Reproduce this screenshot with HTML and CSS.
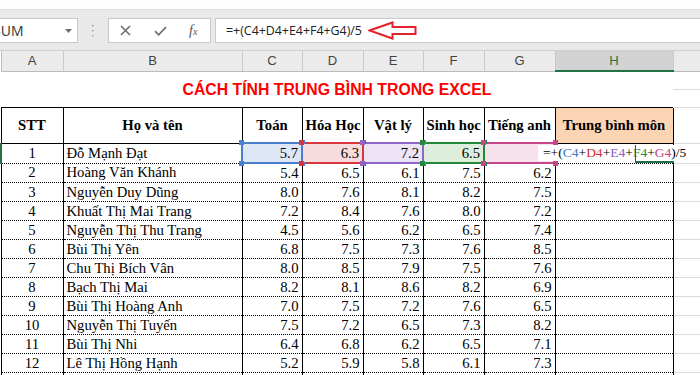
FILE: index.html
```html
<!DOCTYPE html>
<html lang="vi">
  <head>
    <meta charset="UTF-8" />
    <title>Cách tính trung bình trong Excel</title>
    <link rel="stylesheet" href="styles.css">
  </head>
  <body>
    <div class="ribbon-edge"></div>

    <div class="formula-bar">
      <div class="name-box">
        <span>SUM</span>
        <svg class="drop" width="7" height="4" viewBox="0 0 7 4"><path d="M0 0h7L3.5 4z" fill="#6d6d6d"/></svg>
      </div>
      <svg class="grip" width="3" height="12" viewBox="0 0 3 12">
        <rect x="1" y="0" width="1.4" height="1.4" fill="#9a9a9a"/>
        <rect x="1" y="5" width="1.4" height="1.4" fill="#9a9a9a"/>
        <rect x="1" y="10" width="1.4" height="1.4" fill="#9a9a9a"/>
      </svg>
      <div class="fx-buttons">
        <svg class="cancel" width="11" height="11" viewBox="0 0 11 11"><path d="M1 1l9 9M10 1l-9 9" stroke="#6e6e6e" stroke-width="1.6" fill="none"/></svg>
        <svg class="enter" width="13" height="10" viewBox="0 0 13 10"><path d="M1 5.2l3.6 3.6L12 1.2" stroke="#6e6e6e" stroke-width="1.7" fill="none"/></svg>
        <span class="fx"><i>f</i><small>x</small></span>
      </div>
      <div class="formula-input">
        <span class="formula-text">=+(C4+D4+E4+F4+G4)/5</span>
        <svg class="arrow" width="50" height="19" viewBox="0 0 50 19">
          <path d="M1.5 9.5L24.5 1.5V6H47.5V13H24.5V17.5Z" fill="#fff" stroke="#e5212b" stroke-width="2" stroke-linejoin="miter"/>
        </svg>
      </div>
    </div>

    <table class="sheet">
      <colgroup>
        <col style="width:62px">
        <col style="width:179px">
        <col style="width:60px">
        <col style="width:61px">
        <col style="width:60px">
        <col style="width:61px">
        <col style="width:71px">
        <col style="width:118px">
        <col style="width:64px">
      </colgroup>
      <thead>
        <tr class="col-heads">
          <th>A</th><th>B</th><th>C</th><th>D</th><th>E</th><th>F</th><th>G</th>
          <th class="active">H</th><th></th>
        </tr>
      </thead>
      <tbody>
        <tr class="title-row">
          <td colspan="8" class="title">CÁCH TÍNH TRUNG BÌNH TRONG EXCEL</td>
          <td class="void"></td>
        </tr>
        <tr class="head-row">
          <th>STT</th><th>Họ và tên</th><th>Toán</th><th>Hóa Học</th><th>Vật lý</th>
          <th>Sinh học</th><th>Tiếng anh</th><th class="avg">Trung bình môn</th>
          <td class="void"></td>
        </tr>
        <tr class="data-row current">
          <td class="stt">1</td><td>Đỗ Mạnh Đạt</td>
          <td class="num ref ref-c">5.7</td><td class="num ref ref-d">6.3</td>
          <td class="num ref ref-e">7.2</td><td class="num ref ref-f">6.5</td>
          <td class="num ref ref-g"></td>
          <td class="editing">
            <span class="edit-box">=+(<b class="c">C4</b>+<b class="d">D4</b>+<b class="e">E4</b>+<b class="f">F4</b>+<b class="g">G4</b>)/5<span class="edit-line"></span><span class="edit-under"></span></span>
          </td>
          <td class="void"></td>
        </tr>
        <tr class="data-row">
          <td class="stt">2</td><td>Hoàng Văn Khánh</td>
          <td class="num">5.4</td><td class="num">6.5</td><td class="num">6.1</td><td class="num">7.5</td><td class="num">6.2</td>
          <td></td><td class="void"></td>
        </tr>
        <tr class="data-row">
          <td class="stt">3</td><td>Nguyễn Duy Dũng</td>
          <td class="num">8.0</td><td class="num">7.6</td><td class="num">8.1</td><td class="num">8.2</td><td class="num">7.5</td>
          <td></td><td class="void"></td>
        </tr>
        <tr class="data-row">
          <td class="stt">4</td><td>Khuất Thị Mai Trang</td>
          <td class="num">7.2</td><td class="num">8.4</td><td class="num">7.6</td><td class="num">8.0</td><td class="num">7.2</td>
          <td></td><td class="void"></td>
        </tr>
        <tr class="data-row">
          <td class="stt">5</td><td>Nguyễn Thị Thu Trang</td>
          <td class="num">4.5</td><td class="num">5.6</td><td class="num">6.2</td><td class="num">6.5</td><td class="num">7.4</td>
          <td></td><td class="void"></td>
        </tr>
        <tr class="data-row">
          <td class="stt">6</td><td>Bùi Thị Yên</td>
          <td class="num">6.8</td><td class="num">7.5</td><td class="num">7.3</td><td class="num">7.6</td><td class="num">8.5</td>
          <td></td><td class="void"></td>
        </tr>
        <tr class="data-row">
          <td class="stt">7</td><td>Chu Thị Bích Vân</td>
          <td class="num">8.0</td><td class="num">8.5</td><td class="num">7.9</td><td class="num">7.5</td><td class="num">7.6</td>
          <td></td><td class="void"></td>
        </tr>
        <tr class="data-row">
          <td class="stt">8</td><td>Bạch Thị Mai</td>
          <td class="num">8.2</td><td class="num">8.1</td><td class="num">8.6</td><td class="num">8.2</td><td class="num">6.9</td>
          <td></td><td class="void"></td>
        </tr>
        <tr class="data-row">
          <td class="stt">9</td><td>Bùi Thị Hoàng Anh</td>
          <td class="num">7.0</td><td class="num">7.5</td><td class="num">7.2</td><td class="num">7.6</td><td class="num">6.5</td>
          <td></td><td class="void"></td>
        </tr>
        <tr class="data-row">
          <td class="stt">10</td><td>Nguyễn Thị Tuyến</td>
          <td class="num">7.5</td><td class="num">7.2</td><td class="num">6.5</td><td class="num">7.3</td><td class="num">8.2</td>
          <td></td><td class="void"></td>
        </tr>
        <tr class="data-row">
          <td class="stt">11</td><td>Bùi Thị Nhi</td>
          <td class="num">6.4</td><td class="num">6.8</td><td class="num">6.2</td><td class="num">6.5</td><td class="num">7.1</td>
          <td></td><td class="void"></td>
        </tr>
        <tr class="data-row">
          <td class="stt">12</td><td>Lê Thị Hồng Hạnh</td>
          <td class="num">5.2</td><td class="num">5.9</td><td class="num">5.8</td><td class="num">6.1</td><td class="num">7.3</td>
          <td></td><td class="void"></td>
        </tr>
        <tr class="data-row">
          <td class="stt">13</td><td>Nguyễn Văn Hùng</td>
          <td class="num">6.6</td><td class="num">7.0</td><td class="num">6.9</td><td class="num">7.2</td><td class="num">6.8</td>
          <td></td><td class="void"></td>
        </tr>
      </tbody>
    </table>
  </body>
</html>
```

FILE: styles.css
```css
body {
  margin: 0;
  overflow: hidden;
  background-color: #fff;
  font-family: "Liberation Serif", serif;
}
.ribbon-edge {
  height: 9px;
  background-color: #fdfdfd;
  border-bottom: 1px solid #dedede;
}
.formula-bar {
  display: flex;
  align-items: flex-start;
  height: 32px;
  padding-top: 8px;
  background-color: #e9e9e9;
  border-bottom: 1px solid #d0d0d0;
}
.name-box {
  margin-left: -12px;
  width: 90px;
  height: 25px;
  box-sizing: border-box;
  padding: 0 5px 0 4px;
  display: flex;
  align-items: center;
  justify-content: space-between;
  background-color: #fff;
  border: 1px solid #c8c8c8;
  font: 14px "Open Sans", sans-serif;
  color: #333;
}
.grip {
  margin: 7px 14px 0 13px;
}
.fx-buttons {
  width: 103px;
  height: 25px;
  box-sizing: border-box;
  display: flex;
  align-items: center;
  padding-left: 11px;
  background-color: #fff;
  border: 1px solid #c8c8c8;
}
.enter {
  margin-left: 23px;
}
.fx {
  margin-left: 22px;
  font-family: "Liberation Serif", serif;
  font-size: 14px;
  color: #555;
}
.fx small {
  font-size: 10px;
  font-style: italic;
}
.formula-input {
  flex: 1;
  margin-left: 4px;
  height: 25px;
  box-sizing: border-box;
  display: flex;
  align-items: center;
  padding-left: 10px;
  background-color: #fff;
  border: 1px solid #c8c8c8;
  border-right: none;
}
.formula-text {
  font: 12.4px "Open Sans", sans-serif;
  color: #222;
}
.arrow {
  margin-left: 6px;
}

.sheet {
  border-collapse: collapse;
  table-layout: fixed;
  width: 736px;
  font-size: 14.7px;
  color: #000;
}
.sheet th,
.sheet td {
  padding: 0 3px;
  white-space: nowrap;
  overflow: hidden;
}
.col-heads th {
  height: 19px;
  padding: 0;
  background-color: #ebebeb;
  border-right: 1px solid #cacaca;
  border-bottom: 1px solid #bcbcbc;
  font: 13px "Liberation Sans", sans-serif;
  color: #444;
}
.col-heads th:first-child {
  border-left: 1px solid #bcbcbc;
}
.col-heads .active {
  background-color: #d3d3d3;
  color: #217346;
  border-bottom: 2px solid #217346;
}
.title {
  height: 35px;
  text-align: center;
  color: #ff0000;
  font: bold 15.8px "Liberation Sans", sans-serif;
}
.title-row .void {
  background: linear-gradient(#dcdcdc, #dcdcdc) 0 50% / 100% 1px no-repeat #fff;
}
.head-row th {
  height: 34px;
  border: 1px solid #000;
  font-weight: bold;
}
.head-row .avg {
  background-color: #fbd4b4;
}
.data-row td {
  height: 18px;
  border-left: 1px solid #000;
  border-right: 1px solid #000;
  border-bottom: 1px dotted #000;
}
.sheet .void {
  border-left: none;
  border-right: none;
  border-bottom: 1px solid #dadada;
}
.stt {
  text-align: center;
}
.num {
  text-align: right;
}
.current td:first-child {
  border-left: 2px solid #217346;
}

/* formula reference boxes on the edited row */
.data-row .ref {
  position: relative;
  overflow: visible;
  border: 2px solid var(--c);
  background-color: var(--bg);
}
.ref::after {
  content: "";
  position: absolute;
  top: -4px;
  left: -4px;
  right: -4px;
  bottom: -4px;
  background:
    linear-gradient(var(--c), var(--c)) left top / 5px 5px no-repeat,
    linear-gradient(var(--c), var(--c)) right top / 5px 5px no-repeat,
    linear-gradient(var(--c), var(--c)) left bottom / 5px 5px no-repeat,
    linear-gradient(var(--c), var(--c)) right bottom / 5px 5px no-repeat;
  pointer-events: none;
}
.ref-c { --c: #4a7fd0; --bg: #dde7f5; }
.ref-d { --c: #d8353c; --bg: #f8dcdd; }
.ref-e { --c: #8e66c8; --bg: #ece4f5; }
.ref-f { --c: #23893a; --bg: #deeedc; }
.ref-g { --c: #c4478c; --bg: #f7e1ec; }

.data-row .editing {
  position: relative;
  overflow: visible;
}
.edit-box {
  position: absolute;
  left: -18px;
  top: 1px;
  width: 150px;
  height: 16px;
  padding-left: 5px;
  font-size: 13.5px;
  line-height: 16px;
  background-color: #fff;
}
.edit-box b {
  font-weight: normal;
}
.edit-box .c { color: #3f77c9; }
.edit-box .d { color: #d23038; }
.edit-box .e { color: #8a5fc6; }
.edit-box .f { color: #23893a; }
.edit-box .g { color: #c03f88; }
.edit-line {
  position: absolute;
  left: 97px;
  top: 0;
  bottom: -2px;
  width: 1px;
  background-color: #4a4a4a;
}
.edit-under {
  position: absolute;
  left: 97px;
  bottom: -2px;
  width: 39px;
  height: 2px;
  background-color: #217346;
}
```
